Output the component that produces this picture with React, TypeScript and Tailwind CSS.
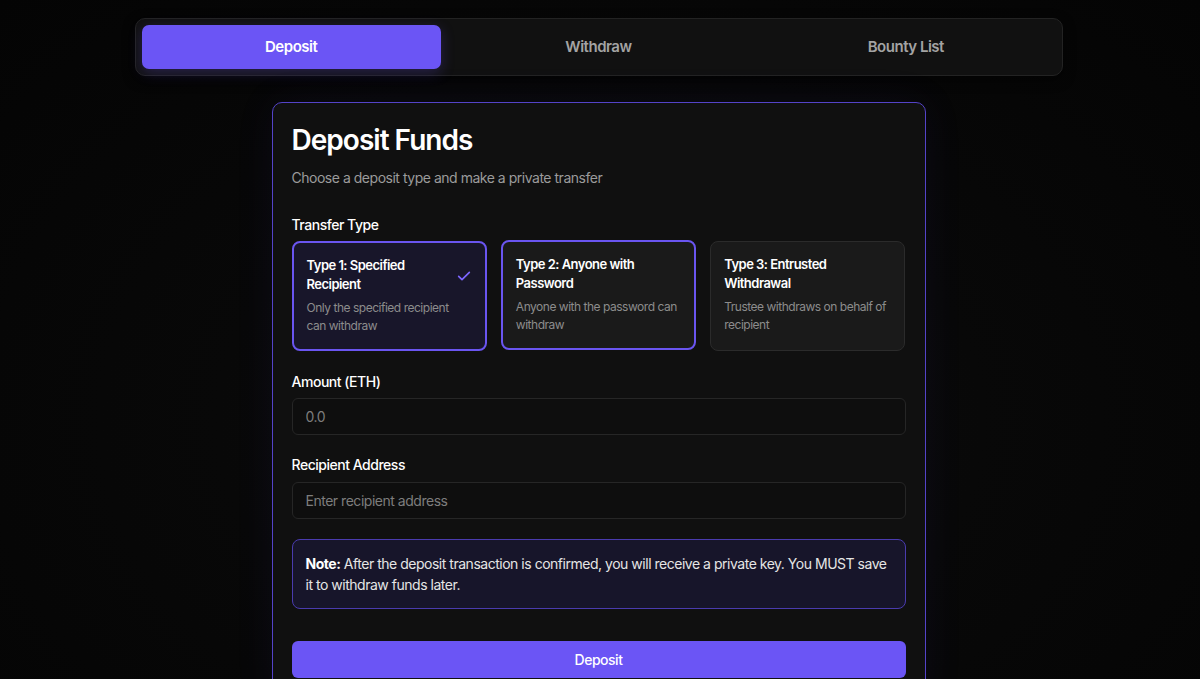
import React, { useState } from "react";

const types = [
  { title: "Type 1: Specified Recipient", desc: "Only the specified recipient can withdraw" },
  { title: "Type 2: Anyone with Password", desc: "Anyone with the password can withdraw" },
  { title: "Type 3: Entrusted Withdrawal", desc: "Trustee withdraws on behalf of recipient" },
];

const tabs = ["Deposit", "Withdraw", "Bounty List"];

function Check() {
  return (
    <svg width="16" height="16" viewBox="0 0 24 24" fill="none" stroke="#7c66ff" strokeWidth="2.5" strokeLinecap="round" strokeLinejoin="round">
      <path d="M4 12.5l5 5L20 6.5" />
    </svg>
  );
}

export default function App() {
  const [tab, setTab] = useState(0);
  const [selected, setSelected] = useState(0);

  return (
    <div className="min-h-[679px] bg-[#060606] bg-[radial-gradient(ellipse_at_50%_60%,#0d0d0d_0%,#080808_45%,#040404_100%)] font-['Inter',sans-serif] tracking-[-0.03em] text-white">
      <div className="pt-[18px] flex flex-col items-center">
        <div className="mr-[3px] w-[928px] h-[58px] rounded-[10px] border border-[#232323] bg-[#111111] p-[6px] flex gap-2 shadow-[0_4px_12px_rgba(0,0,0,0.5)]">
          {tabs.map((t, i) => (
            <button
              key={t}
              onClick={() => setTab(i)}
              className={
                i === tab
                  ? "flex-1 rounded-[7px] bg-[#6b55f5] text-white text-[15px] font-semibold shadow-[0_4px_14px_rgba(107,85,245,0.25)]"
                  : "flex-1 rounded-[7px] text-[#a3a3a3] text-[15px] font-semibold"
              }
            >
              {t}
            </button>
          ))}
        </div>

        <div className="mr-[3px] mt-[26px] w-[654px] rounded-[10px] border border-[#5443c8] bg-[#101010] px-[19px] pt-[18px] pb-6 shadow-[0_0_40px_rgba(80,60,200,0.08)]">
          <h1 className="text-[28px] font-semibold leading-[38px] tracking-[-0.035em]">Deposit Funds</h1>
          <p className="mt-[9px] text-[14px] leading-5 text-[#9b9b9b]">Choose a deposit type and make a private transfer</p>

          <div className="mt-[27px] text-[14px] font-medium leading-5">Transfer Type</div>
          <div className="mt-[6px] grid grid-cols-3 gap-[14px]">
            {types.map((t, i) => {
              const cls =
                i === selected
                  ? "bg-[#18162a] border-2 border-[#6a55f0]"
                  : i === 1
                  ? "bg-[#1a1a1a] border-2 border-[#6a55f0] -translate-y-px"
                  : "bg-[#1a1a1a] border border-[#2b2b2b]";
              return (
                <button
                  key={t.title}
                  onClick={() => setSelected(i)}
                  className={`h-[110px] rounded-[8px] text-left px-[13px] pt-[13px] flex items-start justify-between gap-[2px] ${cls}`}
                >
                  <div>
                    <div className="text-[13px] font-semibold leading-[19px] tracking-[-0.04em] text-white">{t.title}</div>
                    <div className="mt-[5px] text-[12px] leading-[18px] text-[#8c8c8c]">{t.desc}</div>
                  </div>
                  {i === selected && (
                    <div className="mt-[12px] shrink-0">
                      <Check />
                    </div>
                  )}
                </button>
              );
            })}
          </div>

          <label className="block mt-[21px] text-[14px] font-medium leading-5">Amount (ETH)</label>
          <input
            placeholder="0.0"
            className="mt-[6px] w-full h-[37px] rounded-[6px] border border-[#262626] bg-[#0e0e0e] px-[13px] text-[14px] text-white placeholder:text-[#7d7d7d] outline-none"
          />

          <label className="block mt-[20px] text-[14px] font-medium leading-5">Recipient Address</label>
          <input
            placeholder="Enter recipient address"
            className="mt-[7px] w-full h-[37px] rounded-[6px] border border-[#262626] bg-[#0e0e0e] px-[13px] text-[14px] text-white placeholder:text-[#7d7d7d] outline-none"
          />

          <div className="mt-[20px] rounded-[8px] border border-[#4a3bae] bg-[#17152a] px-[13px] py-[13px] text-[14px] leading-[21px] text-[#e5e5e5]">
            <span className="font-bold text-white">Note:</span> After the deposit transaction is confirmed, you will receive a private key. You MUST save it to withdraw funds later.
          </div>

          <button className="mt-[32px] w-full h-[37px] rounded-[6px] bg-[#6b55f5] text-[14px] font-medium text-white">
            Deposit
          </button>
        </div>
      </div>
    </div>
  );
}
